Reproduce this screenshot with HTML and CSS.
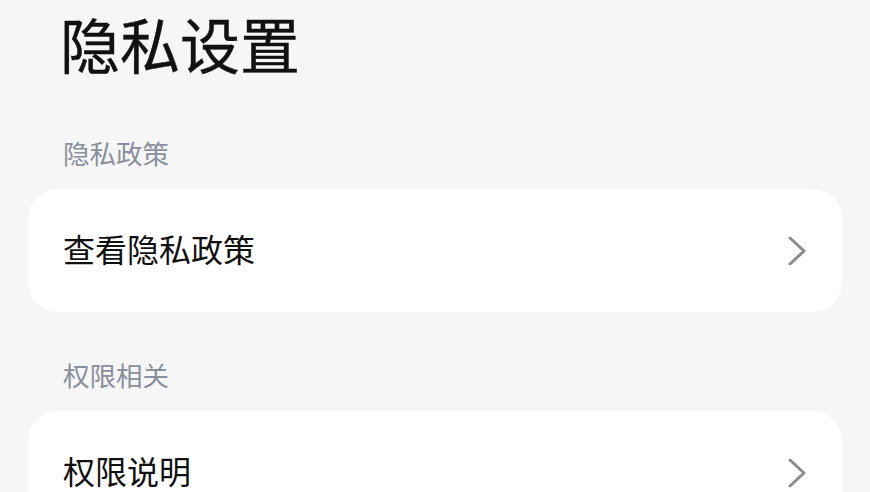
FILE: index.html
```html
<!DOCTYPE html>
<html lang="zh-CN">

<head>
    <meta charset="UTF-8">
    <meta name="viewport" content="width=device-width, initial-scale=1.0">
    <title>隐私设置</title>
    <link rel="stylesheet" href="styles.css">
</head>

<body>

    <h1 class="page-title">隐私设置</h1>

    <!-- 隐私政策 -->
    <div class="group-label">隐私政策</div>
    <div class="card">
        <span class="card-text">查看隐私政策</span>
        <svg class="arrow" width="18" height="30" viewBox="0 0 18 30">
            <polyline points="2,2 16,15 2,28" fill="none" stroke="#8c8c8c" stroke-width="3" stroke-linecap="round" stroke-linejoin="round" />
        </svg>
    </div>

    <!-- 权限相关 -->
    <div class="group-label">权限相关</div>
    <div class="card">
        <span class="card-text">权限说明</span>
        <svg class="arrow" width="18" height="30" viewBox="0 0 18 30">
            <polyline points="2,2 16,15 2,28" fill="none" stroke="#8c8c8c" stroke-width="3" stroke-linecap="round" stroke-linejoin="round" />
        </svg>
    </div>

</body>

</html>
```

FILE: styles.css
```css
body {
    font-family: "Noto Sans CJK SC", "Noto Sans", sans-serif;
    background-color: #f6f6f6;
    color: #111;
    margin: 0;
    padding: 3px 28px 0 28px;
}

.page-title {
    font-size: 60px;
    font-weight: 400;
    line-height: 80px;
    margin: 0 0 52px 0;
    padding-left: 32px;
    -webkit-text-stroke: 0.4px #111;
}

.group-label {
    font-size: 26.5px;
    line-height: 36px;
    color: #8a8f9c;
    padding: 0 0 4px 35px;
    margin-bottom: 14px;
}

.card {
    background-color: #fff;
    border-radius: 30px;
    height: 123px;
    padding: 0 36px 0 35px;
    margin-bottom: 45px;
    display: flex;
    align-items: center;
    justify-content: space-between;
}

.card-text {
    font-size: 32px;
    line-height: 44px;
    padding-bottom: 6px;
}

.arrow {
    display: block;
}
```
